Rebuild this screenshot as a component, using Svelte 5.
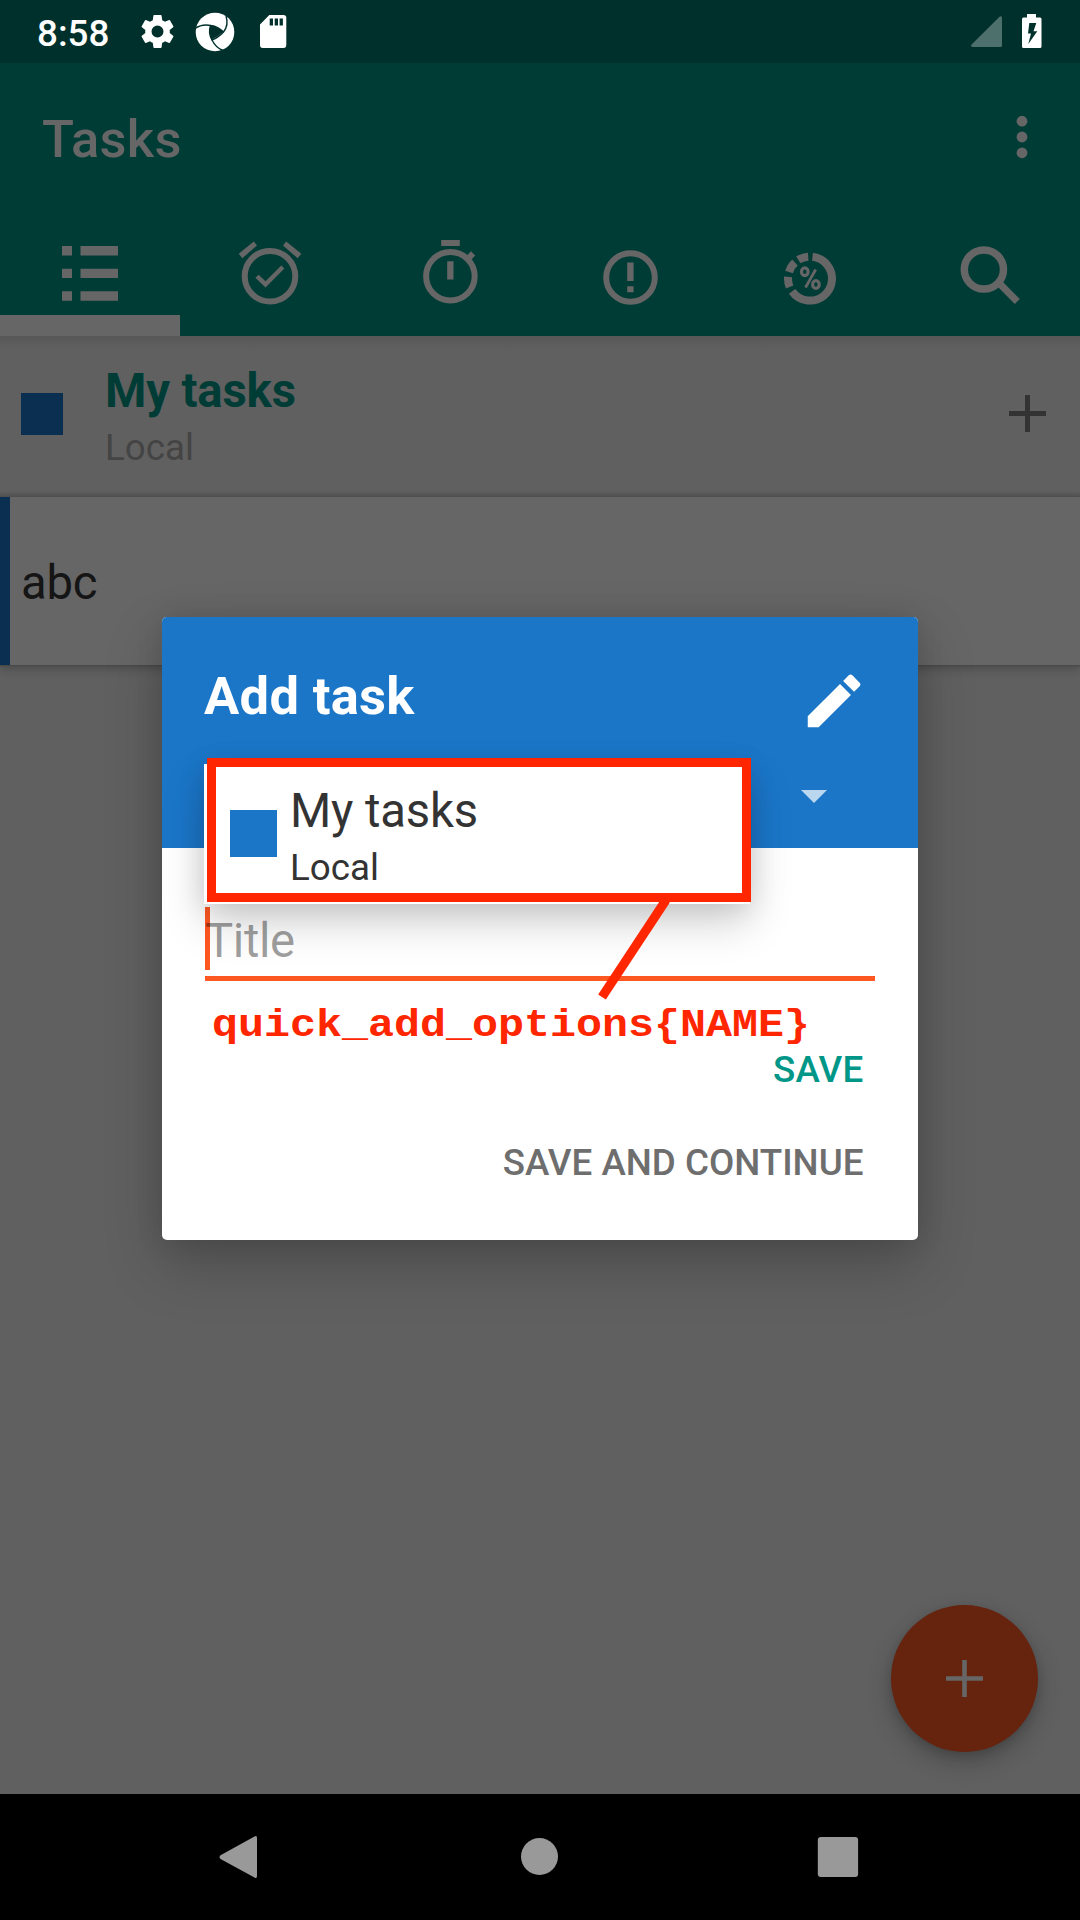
<script>
  const tabs = ['list', 'due', 'start', 'priority', 'progress', 'search'];
</script>

<div class="screen">
  <header class="status">
    <span class="clock">8:58</span>
    <svg class="gear" viewBox="0 0 24 24"><path fill="#fff" d="M19.14 12.94c.04-.3.06-.61.06-.94s-.02-.64-.07-.94l2.03-1.58a.49.49 0 0 0 .12-.61l-1.92-3.32a.49.49 0 0 0-.59-.22l-2.39.96a7 7 0 0 0-1.62-.94l-.36-2.54A.48.48 0 0 0 13.92 2.4h-3.84a.48.48 0 0 0-.48.41l-.36 2.54c-.59.24-1.13.57-1.62.94l-2.39-.96a.49.49 0 0 0-.59.22L2.74 8.87a.48.48 0 0 0 .12.61l2.03 1.58c-.05.3-.09.63-.09.94s.02.64.07.94l-2.03 1.58a.49.49 0 0 0-.12.61l1.92 3.32c.12.22.37.29.59.22l2.39-.96c.5.38 1.03.7 1.62.94l.36 2.54c.05.24.24.41.48.41h3.84c.24 0 .44-.17.47-.41l.36-2.54a7 7 0 0 0 1.62-.94l2.39.96c.22.08.47 0 .59-.22l1.92-3.32a.48.48 0 0 0-.12-.61zM12 15.5a3.5 3.5 0 1 1 0-7 3.5 3.5 0 0 1 0 7z" /></svg>
    <svg class="swirl" viewBox="0 0 40 40">
      <circle cx="20" cy="20" r="19.3" fill="#fff" />
      <path fill="#00302b" d="M15.5 13.5Q22 14.5 28.5 19.5Q23 25 16.5 27.5Q13.500 21 15.500 13.500Z" />
      <g fill="none" stroke="#00302b" stroke-width="1.4">
        <path d="M0 16.500Q7 11.500 16 13.500Q23 14.500 28.500 20" />
        <path d="M31 4Q34 13 28.500 20Q23 26 16.500 28" />
        <path d="M15.500 13.500Q13 21 17 28Q21 36 28 38.500" />
      </g>
    </svg>
    <svg class="sd" viewBox="0 0 26 33"><path fill="#fff" fill-rule="evenodd" d="M9.300 0H23.500Q26.300 0 26.300 2.500V30Q26.300 33 23.500 33H2.700Q0 33 0 30V9.500ZM9.700 3.500V10.500H13V3.500ZM14.700 3.500V10.500H18V3.500ZM19.600 3.500V10.500H22.900V3.500Z" /></svg>
    <svg class="signal" viewBox="0 0 31 31"><path fill="#4d706c" d="M28.500.7Q31-.6 31 2V29.500Q31 31 29.500 31H1.500Q-.6 30.500.6 28.500Z" /></svg>
    <svg class="battery" viewBox="0 0 20 34"><path fill="#fff" fill-rule="evenodd" d="M5 0H14V3.500H18Q19.500 3.500 19.500 5V32.500Q19.500 34 18 34H1.500Q0 34 0 32.500V5Q0 3.500 1.500 3.500H5ZM7.300 9L6 19.500H9L6.300 30L15.300 17.200H11.500L14.300 9Z" /></svg>
  </header>

  <div class="appbar">
    <h1>Tasks</h1>
    <svg class="more" viewBox="0 0 12 44" fill="#666"><circle cx="6" cy="6.200" r="5.400" /><circle cx="6" cy="22" r="5.400" /><circle cx="6" cy="37.800" r="5.400" /></svg>
  </div>

  <nav class="tabs">
    {#each tabs as tab, i}
      <div class="tab" class:active={i === 0}>
        <svg viewBox="{i * 180} 210 180 126" fill="#666">
          {#if tab === 'list'}
            <path d="M62 246h10v9.500H62zM80.500 246H118v9.500H80.500zM62 268.700h10v9.300H62zM80.500 268.700H118v9.300H80.500zM62 291.200h10v9.500H62zM80.500 291.200H118v9.500H80.500z" />
          {:else if tab === 'due'}
            <circle cx="270" cy="276.200" r="25.300" fill="none" stroke="#666" stroke-width="6" />
            <path d="M238.700 253.700L253.800 241.500L257 245.500L242.300 258.300ZM301.300 253.700L286.200 241.500L283 245.500L297.700 258.300ZM255.400 277.700L258.600 274.700L265.500 281.300L281.300 265.500L284.400 268.600L265.500 287.600Z" />
          {:else if tab === 'start'}
            <circle cx="450.400" cy="276.200" r="24.300" fill="none" stroke="#666" stroke-width="6" />
            <path d="M441.200 240h18.600v6h-18.600zM447.200 261.200h6.300v18.300h-6.300zM471 251.300L475.200 255.400L469.500 261.500L465 257.500Z" />
          {:else if tab === 'priority'}
            <circle cx="630.500" cy="277.500" r="24.300" fill="none" stroke="#666" stroke-width="6" />
            <path d="M627.200 262.500h6.400V281h-6.400zM627.200 286.200h6.400v6h-6.400z" />
          {:else if tab === 'progress'}
            <circle cx="810" cy="278.600" r="22" fill="none" stroke="#666" stroke-width="8" pathLength="360" stroke-dasharray="228 13 27 13.500 29 11 27 11.500" transform="rotate(-83.500 810 278.600)" />
            <g fill="none" stroke="#666" stroke-width="3.200">
              <ellipse cx="804.800" cy="271.700" rx="3.300" ry="3.900" />
              <ellipse cx="815.900" cy="284.500" rx="3.300" ry="3.900" />
              <path d="M815.700 269.500L805.500 287.500" stroke-width="2.800" />
            </g>
          {:else}
            <circle cx="983.900" cy="269.500" r="19.600" fill="none" stroke="#666" stroke-width="7.500" />
            <path d="M998.500 282.500L1017.300 301.500" stroke="#666" stroke-width="7" />
          {/if}
        </svg>
      </div>
    {/each}
  </nav>

  <main>
    <section class="group">
      <i class="swatch"></i>
      <div class="names">
        <strong>My tasks</strong>
        <span>Local</span>
      </div>
      <svg class="plus" viewBox="0 0 37 37"><path d="M16 0h5v16h16v5H21v16h-5V21H0v-5h16z" fill="#333" /></svg>
    </section>
    <section class="task">abc</section>
    <div class="fab"><svg viewBox="0 0 37 37"><path d="M16.200 0h4.600v16.200H37v4.600H20.800V37h-4.600V20.800H0v-4.600h16.200z" fill="#666" /></svg></div>
  </main>

  <footer>
    <svg viewBox="0 0 1080 126" fill="#999">
      <path d="M254.500 42.500Q257 41 257 44V82Q257 85 254.500 83.500L220.500 65Q218.500 63 220.500 61.200Z" />
      <circle cx="539.500" cy="62.500" r="18.500" />
      <rect x="817.800" y="43" width="40.300" height="40" rx="3" />
    </svg>
  </footer>

  <div class="dialog">
    <div class="head">
      <div class="title">
        <h2>Add task</h2>
        <svg class="pencil" viewBox="0 0 24 24"><path fill="#fff" d="M3 17.250V21h3.750L17.810 9.940l-3.750-3.750L3 17.250zM20.710 7.040a1 1 0 0 0 0-1.410l-2.340-2.340a1 1 0 0 0-1.410 0l-1.830 1.830 3.750 3.750 1.830-1.830z" /></svg>
      </div>
      <svg class="caret" viewBox="0 0 26 13"><path d="M0 0H26L13 13Z" fill="#fff" fill-opacity=".7" /></svg>
    </div>
    <div class="body">
      <div class="field"><i></i><span>Title</span></div>
      <div class="action save">SAVE</div>
      <div class="action">SAVE AND CONTINUE</div>
    </div>

    <div class="popup">
      <i class="chip"></i>
      <div class="option"><b>My tasks</b><span>Local</span></div>
    </div>
    <div class="callout"></div>
    <svg class="pointer" viewBox="0 0 90 110"><path d="M76 0L12 97" stroke="#ff2600" stroke-width="9.200" /></svg>
    <div class="note">quick_add_options&#123;NAME&#125;</div>
  </div>
</div>

<style>
  :global(body) { margin: 0; background: #000; }
  .screen {
    position: relative; width: 1080px; height: 1920px; overflow: hidden;
    display: flex; flex-direction: column; background: #606060;
    font-family: Roboto, sans-serif;
  }
  svg { display: block; flex: none; overflow: visible; }
  h1, h2 { margin: 0; font-size: 52.5px; white-space: nowrap; letter-spacing: .3px; }

  .status { height: 63px; flex: none; background: #00302b; display: flex; align-items: flex-start; }
  .clock { width: 99px; margin-left: 37px; font-size: 36.75px; line-height: 67px; font-weight: 500; color: #fff; }
  .gear { width: 41px; height: 41px; margin: 11px 0 0 .800px; }
  .swirl { width: 40px; height: 40px; margin: 11.500px 0 0 16.900px; }
  .sd { width: 26px; height: 33px; margin: 15px 0 0 25.300px; }
  .signal { width: 31px; height: 31px; margin: 16px 0 0 auto; }
  .battery { width: 20px; height: 34px; margin: 14px 38px 0 20px; }

  .appbar { height: 147px; flex: none; background: #003c36; display: flex; align-items: flex-start; justify-content: space-between; }
  h1 { margin-left: 42px; line-height: 152px; font-weight: 500; color: #666; }
  .more { width: 12px; height: 44px; margin: 51.500px 51.800px 0 0; }

  .tabs { display: grid; grid-template-columns: repeat(6, 1fr); height: 126px; flex: none; background: #003c36; }
  .tab { height: 126px; box-sizing: border-box; }
  .tab svg { width: 180px; height: 126px; }
  .active { box-shadow: inset 0 -21px #666; }

  main { flex: 1; display: flex; flex-direction: column; background: linear-gradient(#575757, #5e5e5e 10px, #606060 16px); }
  .group { height: 161px; flex: none; display: flex; align-items: flex-start; background: linear-gradient(transparent 155px, #555 160px, #505050 161px); }
  .swatch { width: 42px; height: 42px; margin: 57px 0 0 21px; background: #0b2f50; }
  .names { display: flex; flex-direction: column; margin: 27px auto 0 42px; }
  .names strong { font-size: 47.250px; line-height: 56px; letter-spacing: -.15px; color: #003c36; }
  .names span { font-size: 36.750px; line-height: 43px; margin-top: 7px; color: #444; }
  .plus { width: 37px; height: 37px; margin: 59px 34px 0 0; }
  .task {
    height: 168px; flex: none; box-sizing: border-box; border-left: 10px solid #0b2f50; padding-left: 11px;
    background: #666; color: #151515; font-size: 47.250px; line-height: 173px; letter-spacing: -.3px;
    box-shadow: 0 1px 1px #4a4a4a, 0 4px 9px rgba(0, 0, 0, .22);
  }
  .fab {
    width: 147px; height: 147px; margin: auto 42px 42px auto; border-radius: 50%; background: #66230e;
    display: flex; align-items: center; justify-content: center;
    box-shadow: 0 10px 24px rgba(0, 0, 0, .24), 0 3px 8px rgba(0, 0, 0, .12);
  }
  .fab svg { width: 37px; height: 37px; }
  footer { height: 126px; flex: none; background: #000; }
  footer svg { width: 1080px; height: 126px; }

  .dialog {
    position: absolute; left: 162px; top: 617px; width: 756px; height: 623px; border-radius: 5px;
    background: #fff; box-shadow: 0 24px 58px rgba(0, 0, 0, .22), 0 0 28px rgba(0, 0, 0, .1);
  }
  .head { height: 231px; background: #1b76c8; border-radius: 5px 5px 0 0; display: flex; flex-direction: column; }
  .title { display: flex; justify-content: space-between; align-items: flex-start; padding: 0 49px 0 42px; height: 173px; }
  h2 { line-height: 159px; font-weight: 700; color: #fff; }
  .pencil { width: 70px; height: 70px; margin-top: 49px; }
  .caret { width: 26px; height: 13px; align-self: flex-end; margin-right: 91.500px; }
  .body { display: flex; flex-direction: column; align-items: flex-end; padding: 59px 43px 0; }
  .field { display: flex; width: 670px; height: 69px; border-bottom: 5px solid #ff5722; }
  .field i { width: 5px; height: 63px; background: #ff5722; }
  .field span { margin-left: -5px; font-size: 47.250px; line-height: 69px; letter-spacing: -.4px; color: rgba(0, 0, 0, .39); }
  .action { font-size: 36.750px; line-height: 40px; font-weight: 500; color: #6e6e6e; margin: 53px 11.500px 0 0; white-space: nowrap; }
  .action.save { color: #009688; margin-top: 69px; letter-spacing: .2px; }

  .popup {
    position: absolute; left: 42px; top: 147px; width: 546px; height: 140px; background: #fff;
    display: flex; align-items: flex-start; box-shadow: 0 18px 40px rgba(0, 0, 0, .19), 0 2px 26px rgba(0, 0, 0, .1);
  }
  .chip { width: 47px; height: 47px; margin: 46px 0 0 26px; background: #1b76c8; }
  .option { display: flex; flex-direction: column; margin: 19px 0 0 13px; color: #333; }
  .option b { font-size: 47.250px; line-height: 57px; font-weight: 400; letter-spacing: -.15px; }
  .option span { font-size: 36.750px; line-height: 43px; margin-top: 6px; }
  .callout { position: absolute; left: 45.300px; top: 141.300px; width: 544px; height: 143.700px; box-sizing: border-box; border: 9px solid #ff2600; }
  .pointer { position: absolute; left: 428px; top: 283px; width: 90px; height: 110px; }
  .note {
    position: absolute; left: 49.500px; top: 387px; font: 700 39px/44px "Liberation Mono", monospace; color: #ff2600;
    transform: scaleX(1.111); transform-origin: left; white-space: nowrap;
  }
</style>
